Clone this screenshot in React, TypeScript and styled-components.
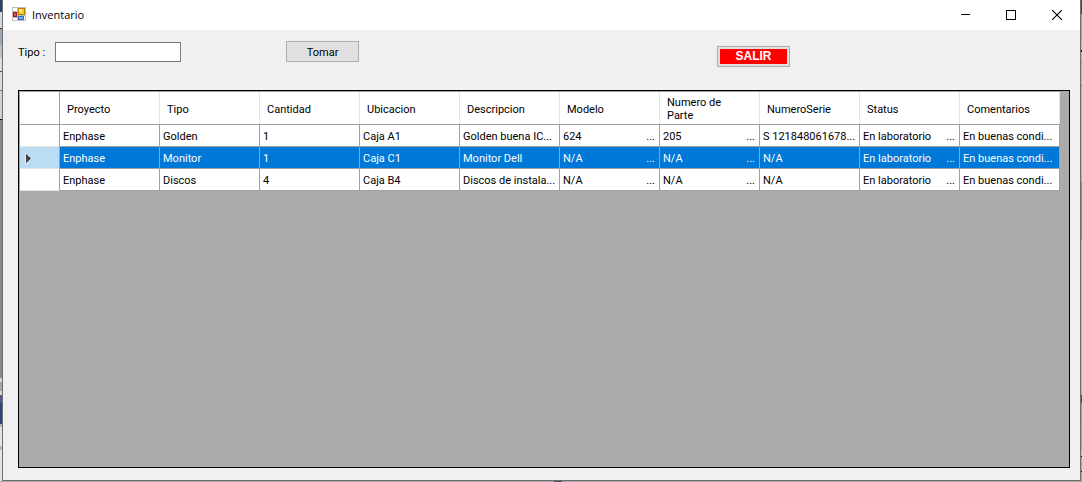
import React from "react";
import styled, { createGlobalStyle } from "styled-components";

const GlobalStyle = createGlobalStyle`
  *, *::before, *::after { box-sizing: border-box; }
  body {
    margin: 0;
    font-family: Roboto, "Liberation Sans", sans-serif;
    font-size: 11px;
    line-height: 13px;
    color: #000;
  }
  button, input { font: inherit; color: inherit; }
`;

const Desktop = styled.div`
  display: grid;
  grid-template-columns: 2px minmax(0, 1fr) 1px;
  grid-template-rows: 1fr 1px;
  min-height: 100vh;
`;

const LeftEdge = styled.div`
  background: linear-gradient(
    #2f4072 0 12px, #d6d9e2 12px 28px, #3c3c40 28px 29px, #9aa9b8 29px 45px,
    #b4c0ca 45px 58px, #dcdcdc 58px 71px, #555 71px 72px, #dcdcdc 72px 90px,
    #777 90px 91px, #d0d0d0 91px 119px, #000 119px 120px, #888 120px 378px,
    #d4d4d4 378px 382px, #a5a5aa 382px 391px, #d4d4d4 391px 395px,
    #4d5c8c 395px 403px, #30427a 403px 424px, #a9b4cf 424px 427px,
    #e4e4e4 427px 446px, #a9b9d8 446px 450px, #e4e4e4 450px
  );
`;

const RightEdge = styled.div`
  background: linear-gradient(
    #35467a 0 14px, #9aa4c2 14px 41px, #b5b8c0 41px 50px, #111 50px 52px,
    #b5b8c0 52px 62px, #777 62px 63px, #b5b8c0 63px 85px, #777 85px 86px,
    #b0b2b8 86px 182px, #7796ad 182px 240px, #b0b2b8 240px 395px,
    #3f4c70 395px 403px, #b49a60 403px 424px, #9aa4bd 424px 450px,
    #c4c4c4 450px 456px, #111 456px 457px, #9eaaa9 457px 471px,
    #111 471px 472px, #9eaaa9 472px
  );
`;

const BottomEdge = styled.div`
  grid-column: 1 / -1;
  background: linear-gradient(90deg, #a4a8a6 0 554px, #44506c 554px 562px, #a4a8a6 562px);
`;

const Window = styled.main`
  display: flex;
  flex-direction: column;
  border: solid #6e6e6e;
  border-width: 0 1px 1px;
  background: #f0f0f0;
`;

const TitleBar = styled.header`
  display: flex;
  align-items: center;
  height: 30px;
  padding-left: 9px;
  background: #fff;

  > svg { margin-bottom: 2px; }
`;

const Title = styled.h1`
  flex: 1;
  margin: 0 0 0 6px;
  font: 400 11px/16px "Open Sans", "Noto Sans", sans-serif;
`;

const CaptionButton = styled.button`
  display: grid;
  place-items: center;
  width: 46px;
  height: 30px;
  padding: 0 0 1px;
  border: 0;
  background: transparent;
`;

const Toolbar = styled.form`
  display: flex;
  align-items: flex-start;
  padding: 11px 290px 0 15px;
  height: 60px;
`;

const FieldLabel = styled.label`
  display: flex;
  align-items: center;
  gap: 10px;
  height: 22px;
`;

const TextBox = styled.input`
  width: 126px;
  height: 20px;
  padding: 0 3px;
  border: 1px solid #7a7a7a;
  background: #fff;
`;

const PushButton = styled.button`
  width: 73px;
  height: 21px;
  margin-left: 105px;
  padding: 2px 0 0;
  border: 1px solid #adadad;
  background: #e1e1e1;
`;

const ExitButton = styled(PushButton)`
  margin: 5px 0 0 auto;
  padding: 2px;
`;

const ExitFace = styled.span`
  display: block;
  background: #f00;
  color: #fff;
  font: 700 12px/15px "Liberation Sans", Arial, sans-serif;
`;

const GridPane = styled.section`
  flex: 1;
  margin: 0 10px 12px 15px;
  border: 1px solid #000;
  background: #ababab;
  overflow: auto;
`;

const DataGrid = styled.table`
  table-layout: fixed;
  width: 1041px;
  border: solid #a0a0a0;
  border-width: 1px 0 0 1px;
  border-collapse: separate;
  border-spacing: 0;
  cursor: default;
`;

const MarkerColumn = styled.col`
  width: 40px;
`;

const ColumnHeader = styled.th`
  height: 33px;
  padding: 2px 30px 0 7px;
  border: solid #a0a0a0;
  border-width: 0 0 1px;
  background: linear-gradient(#e5e5e5, #e5e5e5) right / 1px 100% no-repeat #fff;
  font-weight: 400;
  text-align: left;
`;

const CornerCell = styled.td`
  border: solid #a0a0a0;
  border-width: 0 1px 1px 0;
  background: #fff;
`;

const RowHeader = styled.td<{ $selected: boolean }>`
  padding: 2px 0 0 5px;
  border: solid #a0a0a0;
  border-width: 0 1px 1px 0;
  border-bottom-color: #e5e5e5;
  background: ${(p) => (p.$selected ? "#bcdcf4" : "#fff")};

  svg { display: block; }
`;

const Cell = styled.td<{ $selected: boolean }>`
  height: 22px;
  padding: 2px 4px 0 3px;
  border: solid #a0a0a0;
  border-width: 0 1px 1px 0;
  background: ${(p) => (p.$selected ? "#0078d7" : "#fff")};
  color: ${(p) => (p.$selected ? "#fff" : "#000")};
  white-space: nowrap;
  overflow: hidden;
`;

const Padded = styled.span`
  display: flex;
  justify-content: space-between;
`;

const columns = [
  "Proyecto", "Tipo", "Cantidad", "Ubicacion", "Descripcion",
  "Modelo", "Numero de Parte", "NumeroSerie", "Status", "Comentarios",
];

// A tab in a value separates the text from a right-aligned overflow mark.
const rows = [
  ["Enphase", "Golden", "1", "Caja A1", "Golden buena IC...", "624\t...", "205\t...", "S 121848061678...", "En laboratorio\t...", "En buenas condi..."],
  ["Enphase", "Monitor", "1", "Caja C1", "Monitor Dell", "N/A\t...", "N/A\t...", "N/A", "En laboratorio\t...", "En buenas condi..."],
  ["Enphase", "Discos", "4", "Caja B4", "Discos de instala...", "N/A\t...", "N/A\t...", "N/A", "En laboratorio\t...", "En buenas condi..."],
];

const selectedRow = 1;

const AppIcon = () => (
  <svg width="14" height="14" viewBox="0 0 14 14" shapeRendering="crispEdges" aria-hidden="true">
    <path fill="#bdbdbd" d="M0 0h14v14H0z" />
    <path fill="#fff" d="M1 1h4v3H1zM1 11h4v2H1zM12 9h1v4h-1z" />
    <path fill="#9b1c1c" d="M1 5h4v5H1z" />
    <path fill="#d84a40" d="M2 6h2v3H2z" />
    <path fill="#b98500" d="M6 1h7v7H6z" />
    <path fill="#f7c52d" d="M7 2h5v5H7z" />
    <path fill="#ffe590" d="M7 2h3v3H7z" />
    <path fill="#3367c4" d="M6 9h6v4H6z" />
    <path fill="#77aaf5" d="M7 10h4v2H7z" />
  </svg>
);

export default function App() {
  return (
    <>
      <GlobalStyle />
      <Desktop>
        <LeftEdge />
        <Window>
          <TitleBar>
            <AppIcon />
            <Title>Inventario</Title>
            <CaptionButton aria-label="Minimizar">
              <svg width="10" height="10" shapeRendering="crispEdges"><path d="M1 4h10v1H1z" overflow="visible" /></svg>
            </CaptionButton>
            <CaptionButton aria-label="Maximizar">
              <svg width="10" height="10" shapeRendering="crispEdges">
                <path d="M.5 .5h9v9h-9z" fill="none" stroke="#000" />
              </svg>
            </CaptionButton>
            <CaptionButton aria-label="Cerrar">
              <svg width="10" height="10"><path d="M0 0l10 10M10 0L0 10" stroke="#000" strokeWidth="1.1" /></svg>
            </CaptionButton>
          </TitleBar>
          <Toolbar onSubmit={(e) => e.preventDefault()}>
            <FieldLabel>
              Tipo :
              <TextBox type="text" />
            </FieldLabel>
            <PushButton type="submit">Tomar</PushButton>
            <ExitButton type="button"><ExitFace>SALIR</ExitFace></ExitButton>
          </Toolbar>
          <GridPane>
            <DataGrid>
              <colgroup>
                <MarkerColumn />
                {columns.map((c) => <col key={c} />)}
              </colgroup>
              <thead>
                <tr>
                  <CornerCell />
                  {columns.map((c) => <ColumnHeader key={c} scope="col">{c}</ColumnHeader>)}
                </tr>
              </thead>
              <tbody>
                {rows.map((row, r) => {
                  const selected = r === selectedRow;
                  return (
                    <tr key={r} aria-selected={selected}>
                      <RowHeader $selected={selected}>
                        {selected && (
                          <svg width="7" height="11" viewBox="0 0 7 11">
                            <path d="M0 0l1 0 6 5.5-6 5.5H0z" fill="#e6f1fa" />
                            <path d="M1 .8l5 4.7-5 4.7z" fill="#404040" />
                          </svg>
                        )}
                      </RowHeader>
                      {row.map((value, c) => {
                        const [text, mark] = value.split("\t");
                        return (
                          <Cell key={c} $selected={selected}>
                            {mark ? <Padded><span>{text}</span><span>{mark}</span></Padded> : text}
                          </Cell>
                        );
                      })}
                    </tr>
                  );
                })}
              </tbody>
            </DataGrid>
          </GridPane>
        </Window>
        <RightEdge />
        <BottomEdge />
      </Desktop>
    </>
  );
}
